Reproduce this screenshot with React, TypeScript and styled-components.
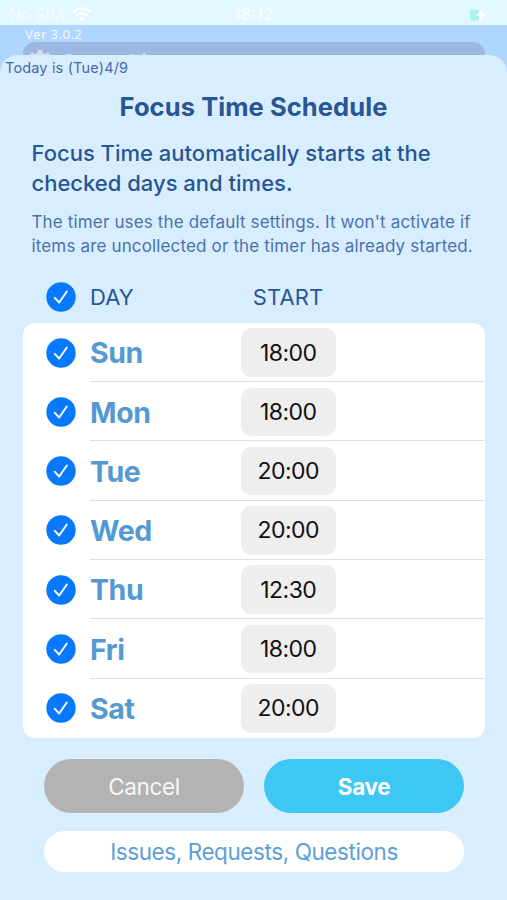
import React from "react";
import styled, { createGlobalStyle } from "styled-components";

const Global = createGlobalStyle`
  *, *::before, *::after { box-sizing: border-box; }
  body { margin: 0; background: #d8eefe; font-family: Inter, "Liberation Sans", sans-serif; }
  button { font-family: inherit; border: 0; padding: 0; }
`;

const Screen = styled.div`
  width: 507px;
  height: 900px;
  overflow: hidden;
  display: flex;
  flex-direction: column;
  background: #afd6ff;
`;

const StatusBar = styled.div`
  flex: none;
  height: 24.5px;
  padding: 5px 19px 0 9px;
  display: grid;
  grid-template-columns: 1fr auto 1fr;
  align-items: center;
  background: #e2f7ff;
  color: #f6fcff;
  font-size: 16px;
  line-height: 19px;
`;

const Carrier = styled.div`
  display: flex;
  align-items: center;
  gap: 8px;
`;

const Clock = styled.div`
  font-weight: 600;
  font-size: 16.5px;
  padding-left: 10px;
`;

const Battery = styled.div`
  display: flex;
  justify-content: flex-end;
`;

const Backdrop = styled.div`
  flex: none;
  height: 30px;
  display: flex;
  flex-direction: column;
`;

const Version = styled.div`
  height: 17px;
  padding-left: 25px;
  font-family: "Noto Sans", sans-serif;
  font-size: 13.2px;
  line-height: 19px;
  letter-spacing: 0.4px;
  color: #f7fbff;
`;

const BackRow = styled.div`
  height: 13px;
  margin: 0 22px 0 23px;
  padding: 7px 0 0 5px;
  display: flex;
  gap: 8px;
  overflow: hidden;
  border-radius: 12px 12px 0 0;
  background: #9ab8e0;
  color: #d2dcea;
  font-size: 22px;
  font-weight: 600;
  line-height: 26px;
`;

const Sheet = styled.div`
  flex: 1;
  display: flex;
  flex-direction: column;
  border-radius: 18px 18px 0 0;
  background: #d8eefe;
  color: #285594;
`;

const Today = styled.div`
  height: 28px;
  padding: 3.5px 0 0 5px;
  font-size: 14.5px;
  line-height: 20px;
  letter-spacing: 0.16px;
  color: #456ba6;
`;

const Title = styled.h1`
  margin: 7px 0 0;
  height: 34px;
  text-align: center;
  font-size: 25.5px;
  line-height: 34px;
  font-weight: 700;
  letter-spacing: 0.08px;
`;

const Lead = styled.p`
  margin: 14px 0 0 31.5px;
  font-size: 22px;
  line-height: 30px;
  font-weight: 500;
  white-space: nowrap;
`;

const Note = styled.p`
  margin: 12.5px 0 0 31.5px;
  font-size: 17px;
  line-height: 24.2px;
  letter-spacing: 0.15px;
  white-space: nowrap;
  color: #4a72ad;
`;

const Columns = styled.div`
  display: grid;
  grid-template-columns: 67px 151px 94px;
  align-items: center;
`;

const HeaderRow = styled(Columns)`
  margin: 12.5px 22px 0 23px;
  height: 52px;
  font-size: 22px;
`;

const StartLabel = styled.span`
  text-align: center;
  letter-spacing: 0.1px;
`;

const Card = styled.div`
  height: 415px;
  margin: 0 22px 0 23px;
  display: grid;
  grid-template-rows: repeat(7, 1fr);
  border-radius: 12px;
  background: #fff;
`;

const DayRow = styled(Columns)`
  background: linear-gradient(#dedfe1, #dedfe1) 67px 100% / 100% 1px no-repeat;
  &:last-child { background: none; }
`;

const CheckCell = styled.span`
  display: flex;
  padding-left: 23.4px;
`;

const DayName = styled.span`
  padding-top: 0.5px;
  font-size: 28.5px;
  font-weight: 700;
  letter-spacing: -0.4px;
  color: #5499d2;
`;

const TimeField = styled.button`
  width: 94.5px;
  height: 48.5px;
  border-radius: 10px;
  background: #eee;
  color: #111;
  font-size: 23px;
  letter-spacing: -0.5px;
`;

const Actions = styled.div`
  margin: 21px 43px 0 44px;
  display: grid;
  grid-template-columns: 1fr 1fr;
  gap: 20px;
`;

const ActionButton = styled.button<{ $primary?: boolean }>`
  height: 54.5px;
  border-radius: 28px;
  background: ${(p) => (p.$primary ? "#3dc7f3" : "#b3b3b3")};
  color: ${(p) => (p.$primary ? "#fff" : "#f7f7f7")};
  font-size: 22.5px;
  letter-spacing: -0.35px;
  font-weight: ${(p) => (p.$primary ? 700 : 400)};
`;

const FeedbackButton = styled.button`
  margin: 18px 43px 0 44px;
  height: 40.5px;
  border-radius: 21px;
  background: #fff;
  color: #5c9fd8;
  font-size: 22.5px;
  letter-spacing: -0.42px;
`;

const Check = () => (
  <svg width="30" height="30" viewBox="0 0 30 30" fill="none">
    <circle cx="15" cy="15" r="14.7" fill="#0879ff" />
    <path d="M8.8 15.8 13.2 20.5 20.8 9.5" stroke="#fff" strokeWidth="1.9" strokeLinecap="round" strokeLinejoin="round" />
  </svg>
);

const Wifi = () => (
  <svg width="20" height="15" viewBox="0 0 20 15" fill="none" stroke="#fff" strokeWidth="2.6">
    <path d="M1.2 5.2C6.2.3 13.8.3 18.8 5.2M4.5 8.7c3.2-3 7.8-3 11 0" />
    <path d="M10 14.5 6.7 11.2c1.9-1.7 4.7-1.7 6.6 0Z" fill="#fff" stroke="none" />
  </svg>
);

const BatteryIcon = () => (
  <svg width="19" height="16" viewBox="0 0 19 16">
    <rect x="1" y="2.5" width="9" height="11" rx="1" fill="#aef2f0" />
    <path d="M14 1 7 9H11.5l-2 6 8-8h-4.8Z" fill="#fff" />
  </svg>
);

const Gear = () => (
  <svg width="24" height="24" viewBox="0 0 24 24" fill="#d2dcea">
    <path d="M9.7 1h4.6l.7 3 2 .9L19.7 3 23 6.3 21 9l.8 2 2.2.5v4l-3 .7-1 2 1.5 2.6-3 2.2-5-2h-4l-3 2-3.5-2.5L4 18l-1-2-3-.6v-4L2.2 11 3 9 1 6.3 4.3 3 7 4.9l2-.9Z" />
  </svg>
);

const schedule = [
  ["Sun", "18:00"],
  ["Mon", "18:00"],
  ["Tue", "20:00"],
  ["Wed", "20:00"],
  ["Thu", "12:30"],
  ["Fri", "18:00"],
  ["Sat", "20:00"],
];

export default function App() {
  return (
    <Screen>
      <Global />
      <StatusBar>
        <Carrier>No SIM <Wifi /></Carrier>
        <Clock>18:12</Clock>
        <Battery><BatteryIcon /></Battery>
      </StatusBar>
      <Backdrop>
        <Version>Ver 3.0.2</Version>
        <BackRow><Gear /><span>Quest List</span></BackRow>
      </Backdrop>
      <Sheet>
        <Today>Today is (Tue)4/9</Today>
        <Title>Focus Time Schedule</Title>
        <Lead>Focus Time automatically starts at the<br />checked days and times.</Lead>
        <Note>The timer uses the default settings. It won't activate if<br />items are uncollected or the timer has already started.</Note>
        <HeaderRow>
          <CheckCell><Check /></CheckCell>
          <span>DAY</span>
          <StartLabel>START</StartLabel>
        </HeaderRow>
        <Card>
          {schedule.map(([day, time]) => (
            <DayRow key={day}>
              <CheckCell><Check /></CheckCell>
              <DayName>{day}</DayName>
              <TimeField>{time}</TimeField>
            </DayRow>
          ))}
        </Card>
        <Actions>
          <ActionButton>Cancel</ActionButton>
          <ActionButton $primary>Save</ActionButton>
        </Actions>
        <FeedbackButton>Issues, Requests, Questions</FeedbackButton>
      </Sheet>
    </Screen>
  );
}
